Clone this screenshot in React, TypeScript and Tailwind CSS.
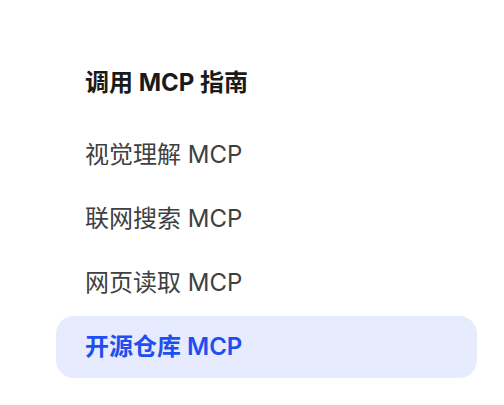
import React from "react";

const items = [
  { label: "视觉理解 MCP", active: false },
  { label: "联网搜索 MCP", active: false },
  { label: "网页读取 MCP", active: false },
  { label: "开源仓库 MCP", active: true },
];

export default function App() {
  return (
    <div
      className="w-full h-[405px] bg-white pt-[52px] pl-[56px] pr-[27px]"
      style={{ fontFamily: 'Inter, "Noto Sans CJK SC", sans-serif' }}
    >
      <div className="h-[62px] flex items-center px-[29px] text-[24px] font-bold text-[#1a1a1a]">
        调用 MCP 指南
      </div>
      <div className="mt-[10px] flex flex-col gap-[2px]">
        {items.map((it) =>
          it.active ? (
            <div
              key={it.label}
              className="h-[62px] flex items-center px-[29px] rounded-[18px] bg-[#e6ebfd] text-[24px] font-semibold text-[#1f4ff0]"
            >
              {it.label}
            </div>
          ) : (
            <div
              key={it.label}
              className="h-[62px] flex items-center px-[29px] rounded-[18px] text-[24px] text-[#404040]"
            >
              {it.label}
            </div>
          )
        )}
      </div>
    </div>
  );
}
